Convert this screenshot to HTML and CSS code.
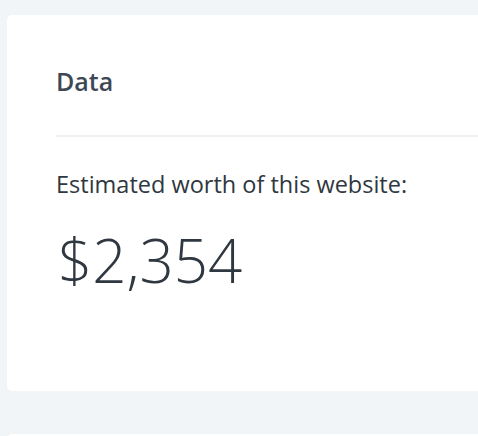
FILE: index.html
```html
<!DOCTYPE html>
<html lang="en">
<head>
<meta charset="utf-8">
<title>Data</title>
<link rel="stylesheet" href="styles.css">
</head>
<body>
<div class="page">
  <section class="card">
    <header class="card-header">
      <h2 class="card-title">Data</h2>
    </header>
    <div class="card-body">
      <p class="worth-label">Estimated worth of this website:</p>
      <p class="worth-value">$2,354</p>
    </div>
  </section>
  <section class="card card-next"></section>
</div>
</body>
</html>
```

FILE: styles.css
```css
html, body {
  margin: 0;
  padding: 0;
}
body {
  background: #f1f5f8;
  font-family: "Open Sans", "Noto Sans", sans-serif;
  color: #3a4552;
  overflow: hidden;
  width: 478px;
  height: 436px;
}
.page {
  padding: 15px 0 0 7px;
  display: flex;
  flex-direction: column;
  gap: 43px;
}
.card {
  background: #ffffff;
  border-radius: 5px;
  width: 600px;
  padding-left: 49px;
  box-sizing: border-box;
}
.card-header {
  padding: 51px 0 39px;
  border-bottom: 2px solid #eff1f3;
}
.card-title {
  margin: 0;
  font-size: 25px;
  font-weight: 600;
  line-height: 30px;
  color: #3d4854;
}
.card-body {
  padding: 32px 0 96px;
}
.worth-label {
  margin: 0;
  font-size: 23.5px;
  line-height: 30px;
  color: #2f3740;
}
.worth-value {
  margin: 26px 0 0;
  padding-left: 2px;
  font-size: 60px;
  font-weight: 300;
  line-height: 70px;
  color: #2f3740;
}
.card-next {
  height: 60px;
}
```
